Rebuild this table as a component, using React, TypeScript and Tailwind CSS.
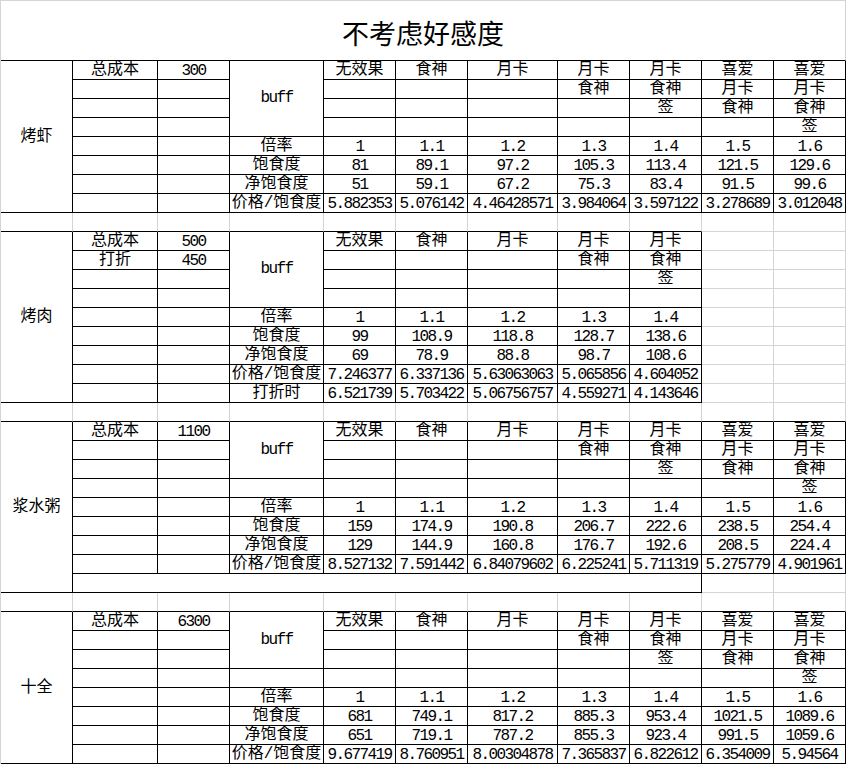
import { clsx } from "clsx"

type Cell = {
  text?: string
  font?: "cjk" | "num"
  colSpan?: 1 | 8 | 11
  rowSpan?: 1 | 3 | 4 | 8 | 9
  middle?: boolean
  title?: boolean
  right: boolean // true = black rule, false = grey gridline
  bottom: boolean
}

type Block = {
  name: string
  rows: 8 | 9
  cols: 5 | 7
  buff: 3 | 4
  extra: boolean
  bc: [string, string][]
  stats: [string, string[]][]
}

const HEAD = [
  ["无效果", "", "", ""],
  ["食神", "", "", ""],
  ["月卡", "", "", ""],
  ["月卡", "食神", "", ""],
  ["月卡", "食神", "签", ""],
  ["喜爱", "月卡", "食神", ""],
  ["喜爱", "月卡", "食神", "签"],
]

const blocks: Block[] = [
  {
    name: "烤虾",
    rows: 8,
    cols: 7,
    buff: 4,
    extra: false,
    bc: [["总成本", "300"]],
    stats: [
      ["倍率", ["1", "1.1", "1.2", "1.3", "1.4", "1.5", "1.6"]],
      ["饱食度", ["81", "89.1", "97.2", "105.3", "113.4", "121.5", "129.6"]],
      ["净饱食度", ["51", "59.1", "67.2", "75.3", "83.4", "91.5", "99.6"]],
      ["价格/饱食度", ["5.882353", "5.076142", "4.46428571", "3.984064", "3.597122", "3.278689", "3.012048"]],
    ],
  },
  {
    name: "烤肉",
    rows: 9,
    cols: 5,
    buff: 4,
    extra: false,
    bc: [["总成本", "500"], ["打折", "450"]],
    stats: [
      ["倍率", ["1", "1.1", "1.2", "1.3", "1.4"]],
      ["饱食度", ["99", "108.9", "118.8", "128.7", "138.6"]],
      ["净饱食度", ["69", "78.9", "88.8", "98.7", "108.6"]],
      ["价格/饱食度", ["7.246377", "6.337136", "5.63063063", "5.065856", "4.604052"]],
      ["打折时", ["6.521739", "5.703422", "5.06756757", "4.559271", "4.143646"]],
    ],
  },
  {
    name: "浆水粥",
    rows: 9,
    cols: 7,
    buff: 3,
    extra: true,
    bc: [["总成本", "1100"]],
    stats: [
      ["倍率", ["1", "1.1", "1.2", "1.3", "1.4", "1.5", "1.6"]],
      ["饱食度", ["159", "174.9", "190.8", "206.7", "222.6", "238.5", "254.4"]],
      ["净饱食度", ["129", "144.9", "160.8", "176.7", "192.6", "208.5", "224.4"]],
      ["价格/饱食度", ["8.527132", "7.591442", "6.84079602", "6.225241", "5.711319", "5.275779", "4.901961"]],
    ],
  },
  {
    name: "十全",
    rows: 8,
    cols: 7,
    buff: 3,
    extra: false,
    bc: [["总成本", "6300"]],
    stats: [
      ["倍率", ["1", "1.1", "1.2", "1.3", "1.4", "1.5", "1.6"]],
      ["饱食度", ["681", "749.1", "817.2", "885.3", "953.4", "1021.5", "1089.6"]],
      ["净饱食度", ["651", "719.1", "787.2", "855.3", "923.4", "991.5", "1059.6"]],
      ["价格/饱食度", ["9.677419", "8.760951", "8.00304878", "7.365837", "6.822612", "6.354009", "5.94564"]],
    ],
  },
]

const ROW_SPAN = { 1: "", 3: "row-span-3", 4: "row-span-4", 8: "row-span-8", 9: "row-span-9" }
const COL_SPAN = { 1: "", 8: "col-span-8", 11: "col-span-11" }

function buildCells(): Cell[] {
  const out: Cell[] = [{ title: true, text: "不考虑好感度", colSpan: 11, right: false, bottom: true }]

  blocks.forEach((b, bi) => {
    for (let i = 0; i < b.rows; i++) {
      if (i === 0) out.push({ text: b.name, font: "cjk", rowSpan: b.rows, middle: true, right: true, bottom: true })

      // merged empty row under 浆水粥
      if (b.extra && i === b.rows - 1) {
        out.push({ colSpan: 8, right: true, bottom: true })
        out.push({ right: false, bottom: false }, { right: false, bottom: false })
        continue
      }

      const [bt, ct] = b.bc[i] ?? ["", ""]
      out.push({ text: bt, font: "cjk", right: true, bottom: true })
      out.push({ text: ct, font: "num", right: true, bottom: true })

      if (i === 0) out.push({ text: "buff", font: "num", rowSpan: b.buff, middle: true, right: true, bottom: true })
      else if (i >= b.buff) out.push({ text: i >= 4 ? b.stats[i - 4][0] : "", font: "cjk", right: true, bottom: true })

      for (let c = 0; c < b.cols; c++) {
        out.push({
          text: i < 4 ? HEAD[c][i] : b.stats[i - 4][1][c],
          font: i < 4 ? "cjk" : "num",
          right: true,
          bottom: true,
        })
      }
      if (b.cols === 5) out.push({ right: false, bottom: false }, { right: false, bottom: false })
    }

    // spacer row between blocks
    if (bi < blocks.length - 1) {
      const edge = blocks[bi + 1].cols === 7 ? 11 : 9
      for (let c = 0; c < 11; c++) out.push({ right: false, bottom: c < edge })
    }
  })

  return out
}

function SheetCell({ cell }: { cell: Cell }) {
  return (
    <div
      className={clsx(
        "flex justify-center overflow-visible whitespace-nowrap border-r border-b text-black",
        cell.middle || cell.title ? "items-center" : "items-end",
        cell.right ? "border-r-black" : "border-r-[#d4d4d4]",
        cell.bottom ? "border-b-black" : "border-b-[#d4d4d4]",
        ROW_SPAN[cell.rowSpan ?? 1],
        COL_SPAN[cell.colSpan ?? 1],
        cell.title && "pt-[3px] font-['Noto_Sans_CJK_SC',sans-serif] text-[27px] leading-none",
        cell.font === "cjk" && "font-['Liberation_Mono','Noto_Sans_CJK_SC',monospace] text-[16px] leading-[18px]",
        cell.font === "num" &&
          "font-['Liberation_Mono','Noto_Sans_CJK_SC',monospace] text-[16px] leading-[15px] tracking-[-1.6px]"
      )}
    >
      {cell.text}
    </div>
  )
}

export default function App() {
  const cells = buildCells()
  return (
    <div className="h-[764px] w-[846px] overflow-hidden bg-white">
      <div className="grid grid-cols-[72px_85px_72px_94px_72px_72px_90px_72px_72px_72px_72px] grid-rows-[60px_repeat(37,19px)] border-t border-l border-[#d4d4d4]">
        {cells.map((cell, i) => (
          <SheetCell key={i} cell={cell} />
        ))}
      </div>
    </div>
  )
}
